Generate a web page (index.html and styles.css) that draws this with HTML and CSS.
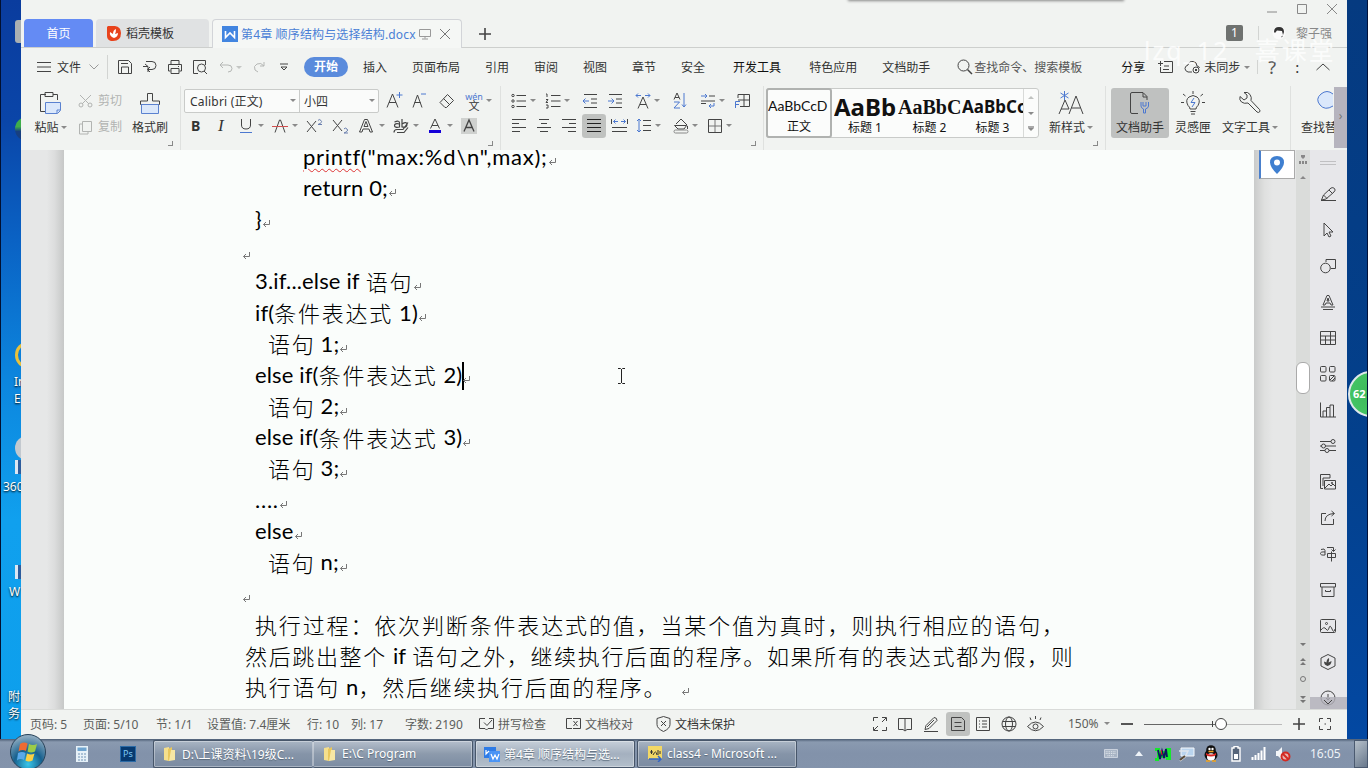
FILE: index.html
```html
<!DOCTYPE html>
<html lang="zh-CN">
<head>
    <meta charset="UTF-8">
    <title>第4章 顺序结构与选择结构.docx</title>
    <link rel="stylesheet" href="styles.css">
</head>
<body>
<svg class="defs" width="0" height="0">
    <symbol id="ret" viewBox="0 0 9 9"><path d="M7.500 1v4.500H1.500M4 3L1.500 5.500 4 8" fill="none" stroke="#777"/></symbol>
    <symbol id="folder" viewBox="0 0 16 16"><path d="M2 2l5-1v14l-5-1z" fill="#f5df8d"/><path d="M6 3l4-2v12l-4 2z" fill="#e9c75c"/><path d="M9 4h4v10l-6 1z" fill="#f7e7a4"/></symbol>
</svg>

<div class="screen">
    <!-- desktop, left edge -->
    <div class="desktop-left">
        <span class="pin drive"></span>
        <span class="pin ball"></span>
        <span class="pin ie-icon"></span>
        <span class="pin ie">In<br>E</span>
        <span class="pin s360-icon"></span>
        <span class="pin shortcut sc1"></span>
        <span class="pin s360">360</span>
        <span class="pin shortcut sc2"></span>
        <span class="pin wps">W</span>
        <span class="pin attach">附件<br>务</span>
    </div>

    <div class="window">
        <!-- tabs -->
        <header class="titlebar">
            <div class="tab home">首页</div>
            <div class="tab template">
                <svg width="14" height="15" viewBox="0 0 14 15"><path d="M1 0h7q6 1 6 7 0 8-8 8H4q-4-1-4-5V1z" fill="#e8431c"/><path d="M7 12Q2 10 3 6l3 2q0-4 3-5 0 3-1 5l3-1q0 4-4 5z" fill="#fff"/></svg>
                <span>稻壳模板</span>
            </div>
            <div class="tab current">
                <svg width="16" height="16" viewBox="0 0 16 16"><path d="M0 0h16v16H0z" fill="#4285e0"/><path d="M3.500 5v6.500L8 7l4.500 4.500V5" fill="none" stroke="#fff" stroke-width="1.600"/></svg>
                <span class="tab-name">第4章 顺序结构与选择结构.docx</span>
                <svg class="ic" width="12" height="12" viewBox="0 0 12 12"><path d="M.5 1.500h11v7H.5zM6 8.500v2M3 11h6" stroke="#999"/></svg>
                <svg class="ic close" width="12" height="12" viewBox="0 0 12 12"><path d="M1 1l10 10M11 1L1 11" stroke="#777"/></svg>
            </div>
            <svg class="ic add" width="14" height="14" viewBox="0 0 14 14"><path d="M7 1v12M1 7h12" stroke="#444" stroke-width="1.600"/></svg>
            <div class="floating-shadow"></div>
            <div class="window-side">
                <div class="window-buttons">
                    <svg class="ic" width="12" height="12" viewBox="0 0 12 12"><path d="M1 9h10" stroke="#888"/></svg>
                    <svg class="ic" width="12" height="12" viewBox="0 0 12 12"><path d="M1.500 1.500h9v9h-9z" stroke="#888"/></svg>
                    <svg class="ic" width="12" height="12" viewBox="0 0 12 12"><path d="M1 1l10 10M11 1L1 11" stroke="#888"/></svg>
                </div>
                <div class="account">
                    <span class="count">1</span>
                    <i class="bar"></i>
                    <svg width="14" height="14" viewBox="0 0 14 14"><circle cx="7" cy="7" r="6.500" fill="#fafafa"/><path d="M2 6Q2 1 7 1t5 5l-1 3-1-4-5-.5L3 7z" fill="#333"/><path d="M9 11l2-1" stroke="#888"/></svg>
                    <span class="user">黎子强</span>
                </div>
            </div>
            <div class="watermark">lzq_12&nbsp;&nbsp; 喜课堂</div>
        </header>

        <!-- menu -->
        <nav class="menubar">
            <div class="file">
                <svg class="ic" width="14" height="12" viewBox="0 0 14 12"><path d="M0 1.500h14M0 6h14M0 10.500h14"/></svg>
                <span>文件</span>
                <svg class="ic" width="10" height="6" viewBox="0 0 10 6"><path d="M.5.500L5 5 9.500.500" stroke="#999"/></svg>
            </div>
            <div class="quick">
                <svg class="ic" width="16" height="16" viewBox="0 0 16 16"><path d="M1.500 1.500h10l3 3v10h-13zM4.500 14V8h7v6M4 4.500h7"/></svg>
                <svg class="ic" width="16" height="16" viewBox="0 0 16 16"><path d="M4 2.500h6q4 0 4 4t-4 4H6M8 8l-2.500 2.500L8 13M1 7.500h5V13M3 5l3 2.500"/></svg>
                <svg class="ic" width="16" height="16" viewBox="0 0 16 16"><path d="M4 5V1.500h8V5M3.500 12h-2V5.500h13V12h-2M4 9.500h8v5H4zM11 7.500h1"/></svg>
                <svg class="ic" width="16" height="16" viewBox="0 0 16 16"><path d="M6 14.500H1.500v-13h12V6M12 12l3 3"/><circle cx="9.500" cy="9" r="4"/></svg>
                <svg class="ic pale" width="14" height="14" viewBox="0 0 14 14"><path d="M4 2L1 5l3 3M1 5h8q4 0 4 3.500T9 12"/></svg>
                <i class="caret pale"></i>
                <svg class="ic pale" width="14" height="14" viewBox="0 0 14 14"><path d="M12 2v4H8M12 6Q9 2 5 4T3 10l3 2"/></svg>
                <svg class="ic" width="8" height="8" viewBox="0 0 8 8"><path d="M0 1h8M1 4l3 3 3-3z"/></svg>
            </div>
            <span class="menu active">开始</span>
            <span class="menu">插入</span>
            <span class="menu">页面布局</span>
            <span class="menu">引用</span>
            <span class="menu">审阅</span>
            <span class="menu">视图</span>
            <span class="menu">章节</span>
            <span class="menu">安全</span>
            <span class="menu dev">开发工具</span>
            <span class="menu special">特色应用</span>
            <span class="menu">文档助手</span>
            <div class="search">
                <svg class="ic" width="16" height="16" viewBox="0 0 16 16"><circle cx="6.500" cy="6.500" r="5.500"/><path d="M10.500 10.500L15 15" stroke-width="1.500"/></svg>
                <span>查找命令、搜索模板</span>
            </div>
            <div class="share">
                <span class="share-text">分享</span>
                <svg class="ic" width="16" height="14" viewBox="0 0 16 14"><path d="M6 1.500h8.500v11h-12V7M0 3.500h5M2.500 1v5M6 6h5M5 9.500h6"/></svg>
                <svg class="ic" width="17" height="14" viewBox="0 0 17 14"><path d="M8 12H4Q1 11 1 8.500T4 5q1-4 5-3.500T13 6q2 0 2.500 2"/><circle cx="12" cy="10" r="3"/><path d="M11 9l2 2M13 9l-2 2"/></svg>
                <span>未同步</span>
                <i class="caret"></i>
                <i class="bar"></i>
                <span class="help">?</span>
                <span class="dots">:</span>
                <svg class="ic" width="14" height="8" viewBox="0 0 14 8"><path d="M.5 7L7 1l6.500 6"/></svg>
            </div>
        </nav>

        <!-- ribbon -->
        <div class="ribbon">
            <div class="group clipboard">
                <div class="big paste">
                    <svg class="ic" width="24" height="24" viewBox="0 0 24 24"><path d="M8 3.500H2.500v17H7M15 3.500h4.500V9M7 1.500h8v4H7z"/><path d="M7.500 11.500h15v8l-3 3h-12z" fill="#dbe8fb" stroke="#5b82d0"/><path d="M22 19h-3v3" stroke="#5b82d0"/></svg>
                    <span>粘贴<i class="caret"></i></span>
                </div>
                <div class="pair">
                    <span><svg class="ic" width="15" height="14" viewBox="0 0 15 14"><path d="M2 1l9 9M13 1L4 10"/><circle cx="3" cy="11" r="2"/><circle cx="12" cy="11" r="2"/></svg>剪切</span>
                    <span><svg class="ic" width="15" height="15" viewBox="0 0 15 15"><path d="M4.500 1.500h9v10h-9zM4 4H1.500v10H10v-2"/></svg>复制</span>
                </div>
                <div class="big brush">
                    <svg class="ic" width="22" height="24" viewBox="0 0 22 24"><path d="M8.500 10V2.500h5V10h7v3.500h-19V10z"/><path d="M2.500 13.500h17v9h-17z" fill="#dbe8fb" stroke="#5b82d0"/></svg>
                    <span>格式刷</span>
                </div>
                <i class="corner"></i>
            </div>
            <div class="group font">
                <div class="row font-top">
                    <div class="combos">
                        <span class="combo face">Calibri (正文)<i class="caret"></i></span>
                        <span class="combo size">小四<i class="caret"></i></span>
                    </div>
                    <svg class="ic" width="17" height="17" viewBox="0 0 17 17"><path d="M1 15.500L6.500 2 12 15.500M3 10.500h7"/><path d="M13.500 0v6M10.500 3h6" stroke="#4c78d0"/></svg>
                    <svg class="ic" width="17" height="17" viewBox="0 0 17 17"><path d="M2 15.500L6.500 3 11 15.500M3.500 10.500h6"/><path d="M10 2h5" stroke="#4c78d0"/></svg>
                    <svg class="ic" width="16" height="16" viewBox="0 0 16 16"><path d="M8.500 1.500l6 6-7 7H6l-5-5zM4.500 5.500l6 6"/></svg>
                    <span class="pinyin"><b>wén</b><em>文</em></span>
                    <i class="caret"></i>
                </div>
                <div class="row font-bottom">
                    <b class="bold">B</b>
                    <i class="italic">I</i>
                    <svg class="ic" width="16" height="16" viewBox="0 0 16 16"><path d="M3.500 1v6q0 4 4.500 4t4.500-4V1"/><path d="M2 14.500h12" stroke="#4c78d0"/></svg>
                    <i class="caret"></i>
                    <svg class="ic" width="16" height="16" viewBox="0 0 16 16"><path d="M3 14.500L7.500 2h1L13 14.500"/><path d="M0 8.500h16" stroke="#d05050"/></svg>
                    <i class="caret"></i>
                    <svg class="ic" width="17" height="16" viewBox="0 0 17 16"><path d="M1 3l9 11M10 3L1 14"/><path d="M12 2.500q1-2 3 0t-3 4h4" stroke="#6a7fae"/></svg>
                    <svg class="ic" width="17" height="16" viewBox="0 0 17 16"><path d="M1 2l9 11M10 2L1 13"/><path d="M12 11q1-2 3 0t-3 4h4" stroke="#6a7fae"/></svg>
                    <svg class="ic" width="16" height="16" viewBox="0 0 16 16"><path d="M1.500 14L6.500 1.500h3L14.500 14H12l-1-3H5l-1 3zM6 8.500l2-5 2 5z"/></svg>
                    <i class="caret"></i>
                    <svg class="ic" width="17" height="16" viewBox="0 0 17 16"><path d="M1.500 4q5-2 5 1v4q-5 1-5-1.500T6.500 6M9 1v8q5 1 5-2.500T9 6M1 14.500q0-3 3-3h6l5-7M4 14.500h7l4-5" stroke-width="1.200"/></svg>
                    <i class="caret"></i>
                    <svg class="ic" width="16" height="16" viewBox="0 0 16 16"><path d="M3.500 10.500L8 1l4.500 9.500M5 7.500h6"/><path d="M2 13.500h12" stroke="#1500d8" stroke-width="3"/></svg>
                    <i class="caret"></i>
                    <svg class="ic" width="16" height="16" viewBox="0 0 16 16"><path d="M0 0h16v16H0z" fill="#cfd1cf" stroke="none"/><path d="M3 13.500L8 2l5 11.500M4.500 9.500h7" stroke-width="1.300"/></svg>
                </div>
                <i class="corner"></i>
            </div>
            <div class="group para">
                <div class="row para-top">
                    <svg class="ic" width="16" height="16" viewBox="0 0 16 16"><circle cx="2" cy="2.500" r="1.200"/><circle cx="2" cy="8" r="1.200"/><circle cx="2" cy="13.500" r="1.200"/><path d="M5.500 2.500H15M5.500 8H15M5.500 13.500H15"/></svg>
                    <i class="caret"></i>
                    <svg class="ic" width="16" height="16" viewBox="0 0 16 16"><path d="M1 1h1v3M1 6.500h2L1 9.500h2M1 12h2v3H1M6 2.500h9.500M6 8h9.500M6 13.500h9.500"/></svg>
                    <i class="caret"></i>
                    <svg class="ic" width="16" height="16" viewBox="0 0 16 16"><path d="M2 1.500h13M9 6h6M9 10h6M2 14.500h13"/><path d="M1 8h6M3.500 5.500L1 8l2.500 2.500" stroke="#4c78d0"/></svg>
                    <svg class="ic" width="16" height="16" viewBox="0 0 16 16"><path d="M2 1.500h13M9 6h6M9 10h6M2 14.500h13"/><path d="M1 8h6M4.500 5.500L7 8l-2.500 2.500" stroke="#4c78d0"/></svg>
                    <svg class="ic" width="16" height="16" viewBox="0 0 16 16"><path d="M3 15.500L8 4l5 11.500M5 11.500h6"/><path d="M6 2.500H1M3 .5l-2 2 2 2M10 2.500h5M13 .5l2 2-2 2" stroke="#4c78d0"/></svg>
                    <i class="caret"></i>
                    <svg class="ic" width="16" height="17" viewBox="0 0 16 17"><path d="M2 7.500L5 1l3 6.500M3 5.500h4"/><path d="M2 10h5.500L2 16h6M12 1v14M10 12.500l2 2.500 2-2.500" stroke="#4c78d0"/></svg>
                    <svg class="ic" width="16" height="16" viewBox="0 0 16 16"><path d="M9 3h6M1 8h14M1 10.500h5"/><path d="M1 3h6M5 1l2 2-2 2M14 10v3H9M11 11l-2 2 2 2" stroke="#4c78d0"/></svg>
                    <i class="caret"></i>
                    <svg class="ic" width="17" height="16" viewBox="0 0 17 16"><path d="M4 5V1.500h11.500v12H6M10 1v12M4 7h11"/><path d="M1.500 15V8.500H6M1.500 11.500H5" stroke="#4c78d0"/></svg>
                </div>
                <div class="row para-bottom">
                    <svg class="ic" width="16" height="16" viewBox="0 0 16 16"><path d="M1 1.500h14M1 5.500h7M1 9.500h14M1 13.500h8"/></svg>
                    <svg class="ic" width="16" height="16" viewBox="0 0 16 16"><path d="M3 1.500h10M5 5.500h6M1 9.500h14M4 13.500h8"/></svg>
                    <svg class="ic" width="16" height="16" viewBox="0 0 16 16"><path d="M1 1.500h14M8 5.500h7M1 9.500h14M7 13.500h8"/></svg>
                    <svg class="ic pressed" width="16" height="16" viewBox="0 0 16 16"><path d="M1 1.500h14M1 5.500h14M1 9.500h14M1 13.500h14" stroke="#222"/></svg>
                    <svg class="ic" width="17" height="16" viewBox="0 0 17 16"><path d="M1 9.500h15M1 13.500h15M.5 1v5M16.500 1v5"/><path d="M7 3.500H2.500M4.500 1.500l-2 2 2 2M10 3.500h4.500M12.500 1.500l2 2-2 2" stroke="#4c78d0"/></svg>
                    <svg class="ic" width="16" height="16" viewBox="0 0 16 16"><path d="M7 2.500h8M7 7.500h8M7 12.500h8"/><path d="M3 1v13M1 3l2-2 2 2M1 12l2 2 2-2" stroke="#4c78d0"/></svg>
                    <i class="caret"></i>
                    <svg class="ic" width="16" height="16" viewBox="0 0 16 16"><path d="M3 6l5-5 6 6-3 4H5L1.500 7.500H13M14.500 8v3"/><rect x="1" y="12" width="14" height="3" rx="1.500" stroke="#888"/></svg>
                    <i class="caret"></i>
                    <svg class="ic" width="16" height="16" viewBox="0 0 16 16"><path d="M1.500 1.500h13v13h-13z"/><path d="M8 2v12M2 8h12" stroke="#777"/></svg>
                    <i class="caret"></i>
                </div>
                <i class="corner"></i>
            </div>
            <div class="group styles">
                <div class="gallery">
                    <div class="style normal"><b>AaBbCcD</b><span>正文</span></div>
                    <div class="style h1"><b>AaBb</b><span>标题 1</span></div>
                    <div class="style h2"><b>AaBbC</b><span>标题 2</span></div>
                    <div class="style h3"><b>AaBbCc</b><span>标题 3</span></div>
                    <div class="scroller"><i class="caret up"></i><i class="caret"></i><i class="caret more"></i></div>
                </div>
                <div class="big new-style">
                    <svg class="ic" width="26" height="24" viewBox="0 0 26 24"><path d="M1 23l6-14 4 9M3 18h8M11 23l7-18 7 18M13.500 17h9"/><path d="M6.500 0v9M2.500 2l8 5M10.500 2l-8 5" stroke="#4c78d0"/></svg>
                    <span>新样式<i class="caret"></i></span>
                </div>
                <i class="corner"></i>
            </div>
            <div class="group tools">
                <div class="big helper">
                    <svg class="ic" width="22" height="24" viewBox="0 0 22 24"><path d="M9 22.500H3q-1.500 0-1.500-1.500V3Q1.500 1.500 3 1.500h11l4 4V9M14 2v4h4"/><path d="M12 11v4q0 2 2.500 3v4h2v-4q3-1 3-3v-4M14 11v4h3v-4" stroke="#4c78d0"/></svg>
                    <span>文档助手</span>
                </div>
                <div class="big idea">
                    <svg class="ic" width="26" height="24" viewBox="0 0 26 24"><path d="M10 18q0-2-2-3.500Q5 9 9 6t8 0 1 8.500q-2 1.500-2 3.500zM10.500 20.500h5M11 23h4M13 0v3M3 3l2.500 2M23 3l-2.500 2M1 11.500h3M22 11.500h3"/><path d="M14 7l-3 4.500h4L12 16" stroke="#4c78d0"/></svg>
                    <span>灵感匣</span>
                </div>
                <div class="big word">
                    <svg class="ic" width="24" height="24" viewBox="0 0 24 24"><path d="M6 1.500q4-1 6 2t1 6l8.500 9q1 1.500 0 2.500t-2.500 0L10 12q-4 1-6.500-1T2 5.500l4 3.500 3-2V4z"/></svg>
                    <span>文字工具<i class="caret"></i></span>
                </div>
            </div>
            <div class="group find">
                <div class="big">
                    <svg class="ic" width="18" height="24" viewBox="0 0 18 24"><path d="M17 15Q9 20 4 14T5 3t12 0" fill="#dbe8fb" stroke="#4c78d0"/></svg>
                    <span>查找替换</span>
                </div>
            </div>
            <div class="ribbon-next">›</div>
        </div>

        <!-- document -->
        <main class="work">
            <div class="margin-left"></div>
            <article class="page">
                <div class="line in3"><span class="en wide"><span class="wavy">printf</span>("max:%d\n",max);</span><svg class="ret"><use href="#ret"/></svg></div>
                <div class="line in3"><span class="en">return 0;</span><svg class="ret"><use href="#ret"/></svg></div>
                <div class="line in1"><span class="en">}</span><svg class="ret"><use href="#ret"/></svg></div>
                <div class="line"><svg class="ret blank"><use href="#ret"/></svg></div>
                <div class="line in1"><span class="en">3.if...else if</span><span class="zh gap">语句</span><svg class="ret"><use href="#ret"/></svg></div>
                <div class="line in1"><span class="en">if(</span><span class="zh">条件表达式</span><span class="en gap">1)</span><svg class="ret"><use href="#ret"/></svg></div>
                <div class="line in2"><span class="zh">语句</span><span class="en gap">1;</span><svg class="ret"><use href="#ret"/></svg></div>
                <div class="line in1"><span class="en">else if(</span><span class="zh">条件表达式</span><span class="en gap">2)</span><i class="cursor"></i><svg class="ret"><use href="#ret"/></svg></div>
                <div class="line in2"><span class="zh">语句</span><span class="en gap">2;</span><svg class="ret"><use href="#ret"/></svg></div>
                <div class="line in1"><span class="en">else if(</span><span class="zh">条件表达式</span><span class="en gap">3)</span><svg class="ret"><use href="#ret"/></svg></div>
                <div class="line in2"><span class="zh">语句</span><span class="en gap">3;</span><svg class="ret"><use href="#ret"/></svg></div>
                <div class="line in1"><span class="en wide">....</span><svg class="ret"><use href="#ret"/></svg></div>
                <div class="line in1"><span class="en">else</span><svg class="ret"><use href="#ret"/></svg></div>
                <div class="line in2"><span class="zh">语句</span><span class="en gap">n;</span><svg class="ret"><use href="#ret"/></svg></div>
                <div class="line"><svg class="ret blank"><use href="#ret"/></svg></div>
                <div class="line in1"><span class="zh loose">执行过程：依次判断条件表达式的值，当某个值为真时，则执行相应的语句，</span></div>
                <div class="line"><span class="zh tight">然后跳出整个</span><span class="en gap">if</span><span class="zh tight gap">语句之外，继续执行后面的程序。如果所有的表达式都为假，则</span></div>
                <div class="line"><span class="zh">执行语句</span><span class="en gap">n</span><span class="zh">，然后继续执行后面的程序。</span><svg class="ret last"><use href="#ret"/></svg></div>
                <svg class="ibeam" width="9" height="16" viewBox="0 0 9 16"><path d="M1 .5h2.500l1 1 1-1H8M4.500 1v14M1 15.500h2.500l1-1 1 1H8" fill="none" stroke="#222"/></svg>
            </article>
            <div class="margin-right">
                <div class="marker"><svg width="14" height="18" viewBox="0 0 14 18"><path d="M7 18Q0 11 0 6.500 0 0 7 0t7 6.500Q14 11 7 18z" fill="#3f7fd0"/><circle cx="7" cy="6.500" r="3" fill="#fff"/></svg></div>
            </div>
            <div class="scrollbar">
                <svg class="scroll-top" width="10" height="30" viewBox="0 0 10 30"><path d="M3 5h4v2L5 9 3 7zM1 11h2v3H1zM4 11h2v3H4zM7 11h2v3H7zM2 29l3-3 3 3z" fill="#888"/></svg>
                <i class="thumb"></i>
                <svg class="scroll-end" width="10" height="68" viewBox="0 0 10 68"><path d="M2 2h6L5 5zM2 20l3-3 3 3zM2 24l3-3 3 3zM2 55h6l-3 3zM2 59h6l-3 3z" fill="#777"/><circle cx="5" cy="38" r="2.500" fill="none" stroke="#777"/></svg>
            </div>
            <aside class="sidebar">
                <i class="grip"></i>
                <svg class="ic" viewBox="0 0 16 16"><path d="M1 14.500h15M1.500 14l2-5L11 2q2-1 3.500.5T14 6l-8 7zM3.500 9L7 12.500M9 4l3.500 3.500"/></svg>
                <svg class="ic" viewBox="0 0 16 16"><path d="M4 1v13l3-3 2 4 2-1-2-4h4z"/></svg>
                <svg class="ic" viewBox="0 0 16 16"><circle cx="5.500" cy="10" r="4.800"/><path d="M6 4V1.500h9.500v9H11"/></svg>
                <svg class="ic" viewBox="0 0 16 16"><path d="M3 11l4-9.500h2L13 11h-2l-1-2H6l-1 2zM7 7l1-3 1 3zM1 13h14M3 15.500h10"/></svg>
                <svg class="ic" viewBox="0 0 16 16"><path d="M.5 1.500h15v13H.5zM.5 6h15M.5 10h15M5.500 6v8.500M10.500 1.500v13"/></svg>
                <svg class="ic" viewBox="0 0 16 16"><rect x=".5" y=".5" width="5.500" height="5.500" rx="1"/><rect x="9.500" y=".5" width="5.500" height="5.500" rx="1"/><rect x=".5" y="9.500" width="5.500" height="5.500" rx="1"/><rect x="9.500" y="9.500" width="5.500" height="5.500" rx="1"/><path d="M10 14l4-4M12 15l3-3"/></svg>
                <svg class="ic" viewBox="0 0 16 16"><path d="M.5.500v14.500H16M3 15V9h3.500v6M6.500 9V5.500H10V15M10 5.500V3h3.500v12"/></svg>
                <svg class="ic" viewBox="0 0 16 16"><path d="M0 3.500h11M0 8h1.500M5 8h11M0 12.500h5M9 12.500h7"/><circle cx="13" cy="3.500" r="2"/><circle cx="3.500" cy="8" r="2"/><circle cx="7" cy="12.500" r="2"/></svg>
                <svg class="ic" viewBox="0 0 16 16"><path d="M3 14.500H.5V.5H10V4H3v8M4.500 6.500h11v8.500h-11zM5 14l4-4 2 2 2-2 2 2"/><circle cx="12" cy="9" r=".7"/></svg>
                <svg class="ic" viewBox="0 0 16 16"><path d="M6 3.500H1.500v11h12V9M5 11q0-7 9-7.500M11.500 1L14.500 3.500 11.500 6"/></svg>
                <svg class="ic" viewBox="0 0 16 16"><path d="M1 3.500q4-1.500 4 1V9Q.5 9.500.5 7.500T5 6M7 1.500h6.500V5M11.500 3.500l2 2 2-2M7.500 7.500h8v4h-8zM11.500 5.500v10"/></svg>
                <svg class="ic" viewBox="0 0 16 16"><path d="M.5 1.500h15V5H.5zM2 5v9.500h12V5M5.500 8v1.500h5V8"/></svg>
                <svg class="ic" viewBox="0 0 16 16"><rect x=".5" y="1.500" width="15" height="13" rx="1"/><path d="M1 12q3-4 5-1t3-1 3 1 3 0"/><circle cx="6.500" cy="5.500" r="1"/></svg>
                <svg class="ic" viewBox="0 0 16 16"><path d="M8 .5l7 3.500v8l-7 3.500L1 12V4z"/><path d="M7.500 12Q4 11 4 7.500l2.500 1Q6.500 5 9 4q.5 2-.5 4.500l3-1.500q0 4-4 5z" fill="#444" stroke="none"/></svg>
                <svg class="ic" viewBox="0 0 16 16"><circle cx="8" cy="8" r="7"/><path d="M8 4v5M6 8l2 2 2-2"/></svg>
                <div class="side-more"><svg class="ic" width="8" height="5" viewBox="0 0 8 5"><path d="M0 0l4 4 4-4"/></svg></div>
            </aside>
        </main>

        <footer class="statusbar">
            <span>页码: 5</span>
            <span class="sep">页面: 5/10</span>
            <span class="sep">节: 1/1</span>
            <span>设置值: 7.4厘米</span>
            <span class="sep">行: 10</span>
            <span>列: 17</span>
            <span class="sep">字数: 2190</span>
            <span class="sep with-icon"><svg class="ic" width="15" height="14" viewBox="0 0 15 14"><path d="M6 1.500H.5v10H6l1.500 1.500L9 11.500h5.500v-10H10M5 5.500l3 3L13 3"/></svg>拼写检查</span>
            <span class="sep with-icon"><svg class="ic" width="15" height="14" viewBox="0 0 15 14"><path d="M6 1.500H.5v10H6M7 1.500h7.500v10H7M7.500 4l4 5M11.500 4l-4 5"/></svg>文档校对</span>
            <span class="sep with-icon dark"><svg class="ic" width="15" height="16" viewBox="0 0 15 16"><path d="M7.500.5l6.500 2v6q0 4-6.500 7-6.500-3-6.500-7v-6zM5 5l5 5M10 5l-5 5"/></svg>文档未保护</span>
            <svg class="ic" width="16" height="16" viewBox="0 0 16 16"><path d="M1.500 5V1.500H6M10 1.500h4.500V5M1.500 11v3.500H6M10 14.500h4.500V11M14 2l-4 4M2 14l4-4"/></svg>
            <svg class="ic" width="16" height="16" viewBox="0 0 16 16"><path d="M8 2.500H1.500v11H6l2 1.500 2-1.500h4.500v-11zM8 2.500V14"/></svg>
            <svg class="ic" width="16" height="16" viewBox="0 0 16 16"><path d="M1 15.500h14M2 13.500l1-4L11 1.500q3 0 3 3l-8 8zM4 11l7-7"/></svg>
            <svg class="ic pressed" width="16" height="16" viewBox="0 0 16 16"><path d="M1.500 1.500h10l3 3v10h-13zM4.500 6.500h7M4.500 10.500h7"/></svg>
            <svg class="ic" width="16" height="16" viewBox="0 0 16 16"><path d="M1.500 1.500h13v13h-13zM4 5h1M7 5h5M4 8h1M7 8h5M4 11h1M7 11h5"/></svg>
            <svg class="ic" width="16" height="16" viewBox="0 0 16 16"><circle cx="8" cy="8" r="7"/><ellipse cx="8" cy="8" rx="3.500" ry="7"/><path d="M1.500 5.500h13M1.500 10.500h13"/></svg>
            <svg class="ic" width="17" height="16" viewBox="0 0 17 16"><path d="M.5 10.500Q8.500 1.500 16.500 10.500 8.500 19 .5 10.500zM8.500 0v3M3 1.500l1 2.500M14 1.500L13 4"/><circle cx="8.500" cy="10.500" r="2.500"/></svg>
            <span class="sep">150%</span>
            <i class="caret"></i>
            <svg class="ic" width="12" height="12" viewBox="0 0 12 12"><path d="M0 6h12" stroke-width="1.800"/></svg>
            <svg class="ic" width="138" height="14" viewBox="0 0 138 14"><path d="M0 7.500h71" stroke="#666"/><path d="M83 7.500h55" stroke="#bbb"/><path d="M68.500 4v6"/><circle cx="77" cy="7" r="5.500" fill="#fff"/></svg>
            <svg class="ic" width="14" height="14" viewBox="0 0 14 14"><path d="M1 7h12M7 1v12" stroke-width="1.600"/></svg>
            <svg class="ic" width="14" height="14" viewBox="0 0 14 14"><path d="M1.500 5V1.500H5M9 1.500h3.500V5M1.500 9v3.500H5M9 12.500h3.500V9M6.500 7h1.500"/></svg>
        </footer>
    </div>

    <div class="desktop-right"><span class="pin speed">62</span></div>

    <!-- taskbar -->
    <div class="taskbar">
        <div class="start">
            <svg class="orb" width="38" height="38" viewBox="0 0 38 38">
                <defs><radialGradient id="og" cx="50%" cy="85%" r="80%"><stop offset="0" stop-color="#38c6ea"/><stop offset=".5" stop-color="#17618f"/><stop offset="1" stop-color="#8daabf"/></radialGradient></defs>
                <circle cx="19" cy="19" r="17.500" fill="url(#og)" stroke="#29435a"/>
                <path d="M11 11q4-2.500 7.500-.5L17 18q-4-2-7.500.5z" fill="#ee6a32"/><path d="M20 11q4 2 8 0l-2 7.500q-4 2-7.500 0z" fill="#9ccc48"/><path d="M9 20q4-2 7.500 0L15 27q-4-2-7 .5z" fill="#5aa9ea"/><path d="M18 20.500q4 2 7.500 0l-2 7q-4 2-7 0z" fill="#fbd044"/>
            </svg>
        </div>
        <svg class="calc" width="12" height="16" viewBox="0 0 12 16"><path d="M0 0h12v16H0z" fill="#e6f1f8"/><path d="M1.500 1.500h9v3.500h-9z" fill="#6fa4cf"/><path d="M2 8h8M2 11h8M2 14h8" stroke="#7093b5" stroke-dasharray="2 1"/></svg>
        <span class="ps">Ps</span>
        <div class="task stack first"><svg width="16" height="16"><use href="#folder"/></svg>D:\上课资料\19级C...</div>
        <div class="task stack second"><svg width="16" height="16"><use href="#folder"/></svg>E:\C Program</div>
        <div class="task on"><svg width="16" height="16" viewBox="0 0 16 16"><path d="M0 1h12v11H0z" fill="#2e7be6"/><path d="M5 5h11v11H5z" fill="#4a94f4"/><path d="M2 4v4l3-3M7 8l2 5 2-4 2 4 2-5" fill="none" stroke="#fff" stroke-width="1.200"/></svg>第4章 顺序结构与选...</div>
        <div class="task"><svg width="16" height="16" viewBox="0 0 16 16"><path d="M1 0h14v13H1z" fill="#f3d865"/><path d="M3 6h3M4.500 4v4M6 9q3-6 4 0M11 4v5M13 5v3" stroke="#333" fill="none"/><path d="M2 13h11M11 10l3 3-3 3" stroke="#3566c4" stroke-width="1.500" fill="none"/></svg>class4 - Microsoft ...</div>
        <div class="tray">
            <svg width="14" height="9" viewBox="0 0 16 10"><path d="M.5.500h15v9H.5z" fill="#a8b4c4" stroke="#d6dde6"/><path d="M2 3h12M2 5h12M4 7.500h8" stroke="#eef2f6" stroke-dasharray="1 1"/></svg>
            <svg width="8" height="5" viewBox="0 0 8 5"><path d="M0 5l4-5 4 5z" fill="#eef3f8"/></svg>
            <svg width="16" height="14" viewBox="0 0 16 14"><path d="M0 1h5v3h6V1h5v12h-5v-2H4v3H0v-3h2V4H0z" fill="#15e82c"/><path d="M3 3l2 9 2-8 2 7 2-9 1 8" fill="none" stroke="#0b1560" stroke-width="1.800"/><path d="M6 3l1 5" stroke="#d22"/></svg>
            <svg width="16" height="16" viewBox="0 0 16 16"><path d="M2 2h13v8H2z" fill="#b9d4ee" stroke="#f5f8fb"/><path d="M0 5h9l-3 6-5 4" fill="none" stroke="#dfe5ec" stroke-width="1.500"/><path d="M1 14l5-4" stroke="#5a4b38" stroke-width="2"/></svg>
            <svg width="16" height="17" viewBox="0 0 16 17"><ellipse cx="8" cy="10" rx="6.500" ry="6" fill="#111"/><circle cx="8" cy="5" r="4.800" fill="#111"/><ellipse cx="8" cy="12" rx="4" ry="3.800" fill="#fff"/><path d="M3 8q5 3 10 0v2q-5 3-10 0z" fill="#d8231f"/><circle cx="6.500" cy="4" r="1.200" fill="#fff"/><circle cx="9.500" cy="4" r="1.200" fill="#fff"/><path d="M5.500 6.500h5M3 16h4M9 16h4" stroke="#f4a51c" stroke-width="1.500"/></svg>
            <svg width="10" height="16" viewBox="0 0 10 16"><path d="M1 2h2V.5h4V2h2v13H1z" fill="#56657a" stroke="#fff" stroke-width="1.400"/><path d="M3 8h4v5H3z" fill="#fff"/></svg>
            <svg width="16" height="13" viewBox="0 0 16 13"><path d="M1.500 13v-3M4.500 13V8M7.500 13V6M10.500 13V3.500M13.500 13V0" stroke="#fff" stroke-width="2"/></svg>
            <svg width="16" height="16" viewBox="0 0 16 16"><path d="M1 5h2l4-4v13L3 10H1z" fill="#f3f5f8"/><circle cx="10.500" cy="10.500" r="4" fill="#e9b4b0" stroke="#d42a22" stroke-width="2"/><path d="M8 8l5 5" stroke="#d42a22" stroke-width="2"/></svg>
        </div>
        <span class="clock">16:05</span>
        <i class="show-desktop"></i>
    </div>
</div>
</body>
</html>
```

FILE: styles.css
```css
* {
    box-sizing: border-box;
}

body {
    margin: 0;
    font-family: "Noto Sans", "Noto Sans CJK SC", sans-serif;
    font-size: 12px;
    color: #333;
    overflow: hidden;
}

i, em {
    font-style: normal;
}

.defs {
    position: absolute;
}

svg {
    display: block;
    flex: none;
}

.screen {
    width: 1368px;
    height: 768px;
    display: grid;
    grid-template-columns: 21px 1326px 21px;
    grid-template-rows: 739px 29px;
}

.ic {
    fill: none;
    stroke: #444;
    stroke-width: 1;
}

.ic.pale {
    stroke: #b5b7b5;
}

.caret {
    display: inline-block;
    width: 0;
    height: 0;
    border: 3px solid transparent;
    border-top: 3px solid #8a8a8a;
    border-bottom: 0;
}

.caret.pale {
    border-top-color: #c4c6c4;
}

/* desktop */
.desktop-left {
    position: relative;
    overflow: hidden;
    border-left: 1px solid #021030;
    background: linear-gradient(#0a3c9e 0, #0a45a8 120px, #0a62c4 240px, #0c86de 380px, #10a0ee 520px, #0d9fec 739px);
    color: #fff;
    text-shadow: 0 1px 2px #000;
}

.pin {
    position: absolute;
    white-space: nowrap;
    line-height: 17px;
}

.drive {
    left: 14px;
    top: 20px;
    width: 12px;
    height: 23px;
    border-radius: 3px;
    background: #aab0b2;
}

.ball {
    left: 14px;
    top: 117px;
    width: 24px;
    height: 24px;
    border-radius: 50%;
    background: linear-gradient(#3fae4a 40%, #173f80 60%);
}

.ie-icon {
    left: 14px;
    top: 342px;
    width: 24px;
    height: 26px;
    border: 3px solid #e9c13a;
    border-radius: 50%;
}

.ie {
    left: 13px;
    top: 373px;
}

.s360-icon {
    left: 14px;
    top: 436px;
    width: 24px;
    height: 24px;
    border-radius: 50%;
    background: #c3c9cf;
}

.shortcut {
    left: 14px;
    width: 12px;
    height: 14px;
    background: #dce6f2;
    border-right: 9px solid #2d5c9c;
}

.sc1 {
    top: 460px;
}

.sc2 {
    top: 565px;
}

.s360 {
    left: 2px;
    top: 478px;
}

.wps {
    left: 8px;
    top: 583px;
}

.attach {
    left: 7px;
    top: 688px;
}

.desktop-right {
    position: relative;
    overflow: hidden;
    border-right: 1px solid #02123a;
    background: linear-gradient(#053a80, #03408c 60%, #0348a2);
}

.speed {
    left: 1px;
    top: 371px;
    width: 46px;
    height: 46px;
    padding-left: 3px;
    border: 2px solid #dfe8ea;
    border-radius: 50%;
    background: radial-gradient(#3db85b, #45c865);
    color: #fff;
    font-weight: bold;
    font-size: 11px;
    line-height: 42px;
}

/* window */
.window {
    display: grid;
    grid-template-rows: 48px 38px 64px 559px 30px;
    background: #f1f3f1;
}

.titlebar {
    position: relative;
    display: flex;
    align-items: flex-end;
    padding-left: 3px;
    border-bottom: 1px solid #cdcfcd;
}

.tab {
    height: 28px;
    display: flex;
    align-items: center;
    border-radius: 4px 4px 0 0;
    white-space: nowrap;
}

.tab.home {
    width: 69px;
    justify-content: center;
    background: #648bf4;
    color: #fff;
}

.tab.template {
    width: 113px;
    margin-left: 3px;
    padding-left: 11px;
    gap: 5px;
    background: #e0e2e3;
}

.tab.current {
    width: 250px;
    height: 29px;
    margin: 0 0 -1px 3px;
    padding-left: 9px;
    gap: 3px;
    border: 1px solid #d2d4d8;
    border-bottom: 0;
    background: #f5f7f5;
    color: #4a7fd6;
}

.tab-name {
    width: 175px;
    letter-spacing: .15px;
}

.close {
    margin-left: 5px;
}

.add {
    margin: 0 0 6px 16px;
}

.floating-shadow {
    position: absolute;
    left: 827px;
    top: -5px;
    width: 276px;
    height: 5px;
    background: #999;
    box-shadow: 0 1px 3px #888;
}

.window-side {
    align-self: stretch;
    margin-left: auto;
    width: 122px;
}

.window-buttons {
    display: flex;
    gap: 18px;
    padding: 3px 0 0 41px;
}

.account {
    display: flex;
    align-items: center;
    height: 20px;
    margin-top: 8px;
}

.count {
    width: 17px;
    height: 16px;
    margin-left: 1px;
    background: #6f7270;
    border-radius: 2px;
    color: #fff;
    line-height: 16px;
    text-align: center;
}

.bar {
    width: 1px;
    height: 14px;
    background: #d2d4d2;
}

.account .bar {
    margin: 0 13px 0 15px;
}

.user {
    margin-left: 10px;
    color: #888;
}

.watermark {
    position: absolute;
    left: 1123px;
    top: 34px;
    z-index: 2;
    color: rgba(255, 255, 255, .8);
    font-size: 25px;
    line-height: 32px;
    letter-spacing: 2px;
    white-space: nowrap;
}

.menubar {
    display: flex;
    align-items: center;
    white-space: nowrap;
}

.file {
    display: flex;
    align-items: center;
    gap: 6px;
    width: 87px;
    height: 24px;
    padding-left: 16px;
    border-right: 1px solid #d2d4d2;
}

.file span {
    margin-right: 2px;
}

.quick {
    display: grid;
    align-items: center;
    width: 196px;
    padding-left: 9px;
    grid-template-columns: 25px 25px 25px 27px 17px 16px 28px 8px;
}

.menu {
    margin-right: 25px;
}

.menu.active {
    width: 44px;
    height: 20px;
    margin-right: 15px;
    border-radius: 10px;
    background: #5a8bdc;
    color: #fff;
    font-weight: bold;
    line-height: 19px;
    text-align: center;
}

.menu.dev {
    margin: 0 28px 0 3px;
    color: #111;
}

.search {
    display: flex;
    align-items: center;
    margin-left: 2px;
    width: 164px;
    color: #555;
}

.search span {
    margin-left: 1px;
}

.share {
    display: grid;
    align-items: center;
    grid-template-columns: 37px 26px 20px 40px 13px 11px 27px 21px 14px;
}

.share-text {
    color: #111;
}

.help {
    font-size: 18px;
    line-height: 20px;
    color: #555;
}

.dots {
    font-size: 15px;
}

/* ribbon */
.ribbon {
    display: grid;
    grid-template-columns: 160px 320px 263px 342px 185px 43px 13px;
    overflow: hidden;
    white-space: nowrap;
}

.group {
    position: relative;
    padding-top: 2px;
    border-right: 1px solid #dfe1df;
}

.corner {
    position: absolute;
    right: 7px;
    bottom: 4px;
    width: 5px;
    height: 5px;
    border-right: 1px solid #888;
    border-bottom: 1px solid #888;
}

.big {
    display: flex;
    flex-direction: column;
    align-items: center;
    gap: 4px;
    padding-top: 3px;
    line-height: 18px;
}

.big .caret {
    margin: 0 -8px 3px 2px;
}

.clipboard {
    display: flex;
}

.paste {
    width: 57px;
}

.paste span {
    margin-right: 6px;
}

.pair {
    display: flex;
    flex-direction: column;
    width: 50px;
    padding-top: 4px;
    gap: 8px;
    line-height: 18px;
    color: #b2b4b2;
}

.pair span {
    display: flex;
    align-items: center;
    gap: 5px;
}

.pair .ic {
    stroke: #b2b4b2;
}

.brush {
    width: 44px;
}

.row {
    display: grid;
    align-items: center;
    height: 25px;
}

.font {
    padding-left: 3px;
}

.font-top {
    grid-template-columns: 202px 25px 28px 27px 20px 6px;
}

.combos {
    display: flex;
    width: 195px;
    height: 24px;
    border: 1px solid #c9cbc9;
    border-radius: 2px;
    background: #fafbfa;
}

.combo {
    display: flex;
    align-items: center;
    justify-content: space-between;
    padding: 0 3px 0 4px;
    flex: 1;
}

.combo.face {
    flex: none;
    width: 115px;
    padding-left: 5px;
    letter-spacing: .2px;
    border-right: 1px solid #c9cbc9;
}

.pinyin {
    display: flex;
    flex-direction: column;
    width: 16px;
    align-items: center;
    line-height: 9px;
}

.pinyin b {
    color: #4c78d0;
    font-size: 9px;
    font-weight: normal;
}

.pinyin em {
    font-size: 11px;
}

.font-bottom {
    padding-left: 4px;
    grid-template-columns: 25px 25px 20px 14px 20px 14px 26px 26px 21px 14px 20px 14px 20px 14px 16px;
}

.bold {
    padding-left: 3px;
    font-size: 14px;
}

.italic {
    padding-left: 5px;
    font: italic 17px "Liberation Serif", serif;
}

.para {
    padding-left: 10px;
}

.para-top {
    grid-template-columns: 19px 15px 19px 18px 25px 28px 19px 18px 28px 19px 15px 16px;
}

.para-bottom {
    grid-template-columns: 25px 25px 25px 25px 25px 19px 18px 19px 15px 19px 6px;
}

.para-bottom .ic {
    margin-top: 1px;
}

.pressed {
    background: #c0c2c0;
    border-radius: 1px;
    box-shadow: 0 0 0 4px #c0c2c0;
}

.styles {
    display: flex;
    padding-left: 2px;
}

.gallery {
    display: flex;
    width: 273px;
    height: 50px;
    border: 1px solid #c9cbc9;
    border-radius: 3px;
    background: #fbfcfb;
    color: #111;
}

.style {
    width: 65px;
    padding: 5px 0 0 1px;
    text-align: center;
    overflow: hidden;
}

.style b {
    display: block;
    height: 25px;
    font-size: 19px;
    line-height: 25px;
    text-align: left;
    overflow: hidden;
}

.style span {
    display: block;
    line-height: 17px;
}

.style.normal {
    margin: -1px;
    width: 66px;
    border: 2px solid #b0b2b0;
    border-radius: 3px;
    padding: 3px 0 0;
}

.style.normal b {
    font: 14px/26px Lato, sans-serif;
}

.style.h1 b {
    font-size: 24px;
}

.style.h1 {
    padding-left: 3px;
}

.style.h2 {
    padding-left: 2px;
}

.style.h2 b {
    font: bold 20px/26px "Liberation Serif", serif;
}

.style.h3 b {
    font-size: 17px;
}

.style.h3 {
    width: 62px;
}

.scroller {
    display: flex;
    flex-direction: column;
    align-items: center;
    justify-content: space-around;
    width: 15px;
    border-left: 1px solid #d8dad8;
}

.caret.up {
    transform: rotate(180deg);
    border-top-color: #c0c2c0;
}

.caret.more {
    height: 3px;
    box-shadow: 0 -2px 0 #aaa;
}

.new-style {
    width: 64px;
}

.new-style span {
    margin-right: 8px;
}

.tools {
    display: flex;
    padding-left: 5px;
}

.helper {
    width: 58px;
    height: 50px;
    background: #bfc1c0;
    border-radius: 3px;
}

.idea {
    width: 48px;
}

.word {
    width: 58px;
}

.word .ic {
    margin-left: 8px;
}

.find {
    border: 0;
    padding-left: 10px;
    overflow: hidden;
}

.find .big {
    width: 48px;
}

.ribbon-next {
    background: #b6b4be;
    color: #777;
    text-align: center;
    line-height: 58px;
    margin: 1px 0 2px;
}

/* document */
.work {
    display: grid;
    grid-template-columns: 43px 1190px 42px 14px 37px;
    background: #e6e7e7;
    overflow: hidden;
}

.margin-left {
    background: linear-gradient(90deg, #e6e7e7 60%, #dcdddd 78%, #c6c8c7);
}

.page {
    position: relative;
    height: 559px;
    overflow: hidden;
    padding-left: 181px;
    background: #fafdfb;
    color: #000;
}

.line {
    display: flex;
    align-items: center;
    height: 31.2px;
    line-height: 27px;
    white-space: nowrap;
}

.line:first-child {
    margin-top: -7.5px;
}

.in1 {
    padding-left: 10px;
}

.in2 {
    padding-left: 23px;
}

.in3 {
    padding-left: 58px;
}

.en {
    margin-bottom: 4px;
    font-family: Lato, sans-serif;
    font-size: 22px;
    letter-spacing: .15px;
}

.en.wide {
    letter-spacing: .75px;
}

.zh {
    margin-bottom: 3px;
    font-family: "Noto Sans CJK SC", sans-serif;
    font-size: 22px;
    font-weight: 300;
    letter-spacing: 1.75px;
}

.zh.tight {
    letter-spacing: 1.65px;
}

.zh.loose {
    letter-spacing: 1.85px;
}

.gap {
    margin-left: 6px;
}

.in2 .gap {
    margin-left: 5px;
}

.wavy {
    text-decoration: underline wavy #d33 1px;
    text-underline-offset: 3px;
}

.ret {
    width: 9px;
    height: 9px;
    margin-top: 7px;
}

.ret.blank {
    margin-left: -3px;
}

.ret.last {
    margin-left: 14px;
}

.cursor {
    width: 2px;
    height: 28px;
    margin-right: -2px;
    background: #000;
}

.ibeam {
    position: absolute;
    left: 553px;
    top: 218px;
}

.margin-right {
    padding-left: 5px;
    background: linear-gradient(90deg, #c9cbca, #dfe0df 25%, #e6e7e7 45%);
}

.marker {
    display: flex;
    justify-content: center;
    align-items: center;
    width: 36px;
    height: 29px;
    padding-right: 2px;
    border: 1px solid #aaa;
    border-left: 2px solid #4a80cc;
    background: #fff;
}

.scrollbar {
    display: flex;
    flex-direction: column;
    align-items: center;
    height: 559px;
    background: #dadcda;
}

.thumb {
    width: 14px;
    height: 32px;
    margin-top: 182px;
    border: 1px solid #aaa;
    border-radius: 6px;
    background: #fff;
}

.scroll-end {
    margin-top: auto;
}

.sidebar {
    position: relative;
    display: flex;
    flex-direction: column;
    align-items: center;
    height: 559px;
    padding-right: 1px;
    overflow: hidden;
    background: #e7e7ea;
}

.sidebar > .ic {
    width: 16px;
    height: 16px;
    margin-bottom: 20px;
}

.grip {
    flex: none;
    width: 16px;
    height: 4px;
    margin: 11px 0 21px;
    border: 1px solid #c0c0c2;
    border-width: 1px 0;
}

.side-more {
    position: absolute;
    left: 0;
    bottom: 0;
    width: 37px;
    height: 12px;
    padding: 3px 14px;
    background: rgba(176, 175, 184, .8);
}

/* status bar */
.statusbar {
    display: grid;
    grid-template-columns: 53px 73px 51px 100px 44px 54px 74px 87px 90px 216px 25px 26px 27px 25px 26px 26px 41px 36px 17px 23px 148px 26px 14px;
    align-items: center;
    padding: 0 0 2px 9px;
    border-top: 1px solid #d9dbd9;
    color: #5c5e5c;
    white-space: nowrap;
}

.sep {
    box-shadow: -10px 0 0 -9px #ccc;
}

.statusbar .with-icon {
    display: flex;
    align-items: center;
    gap: 4px;
}

.statusbar .dark {
    color: #333;
}

/* taskbar */
.taskbar {
    grid-column: 1 / 4;
    display: flex;
    align-items: center;
    background: linear-gradient(#4b5c73 0, #8a9ab0 3px, #8292aa 14px, #8393ab);
    color: #fff;
    white-space: nowrap;
}

.start {
    width: 76px;
    padding-left: 9px;
}

.orb {
    position: relative;
    z-index: 3;
    margin: -12px 0 -8px;
}

.ps {
    width: 16px;
    height: 16px;
    margin: 0 17px 0 32px;
    background: #073a70;
    border: 1px solid #2c6ba6;
    color: #7ec8f4;
    font-size: 9px;
    line-height: 13px;
    text-align: center;
}

.task {
    display: flex;
    align-items: center;
    gap: 4px;
    width: 160px;
    height: 28px;
    margin-right: 2px;
    padding-left: 9px;
    border: 1px solid #47566a;
    border-radius: 2px;
    box-shadow: inset 0 0 0 1px rgba(255, 255, 255, .35);
    background: linear-gradient(#a9b5c4, #8594a8 50%, #7c8ca2);
    text-shadow: 0 1px 1px #567;
}

.task.first {
    margin-right: 0;
    padding-left: 8px;
    border-right: 0;
}

.task.second {
    border-left: 0;
    background: linear-gradient(#b5bfcc, #8c9aac 50%, #7c8ca2);
}

.task.on {
    padding-left: 8px;
    background: linear-gradient(#c6cfd9, #a4b0bf 50%, #b3bfcb);
}

.tray {
    display: grid;
    align-items: center;
    grid-template-columns: 31px 20px 24px 24px 28px 20px 24px 16px;
    margin-left: 305px;
}

.clock {
    width: 44px;
    margin-left: 19px;
    color: #eef3f8;
}

.show-desktop {
    width: 14px;
    height: 28px;
    border: 1px solid #4b5a70;
    background: linear-gradient(135deg, #b6c0ca, #68788c);
}
```
